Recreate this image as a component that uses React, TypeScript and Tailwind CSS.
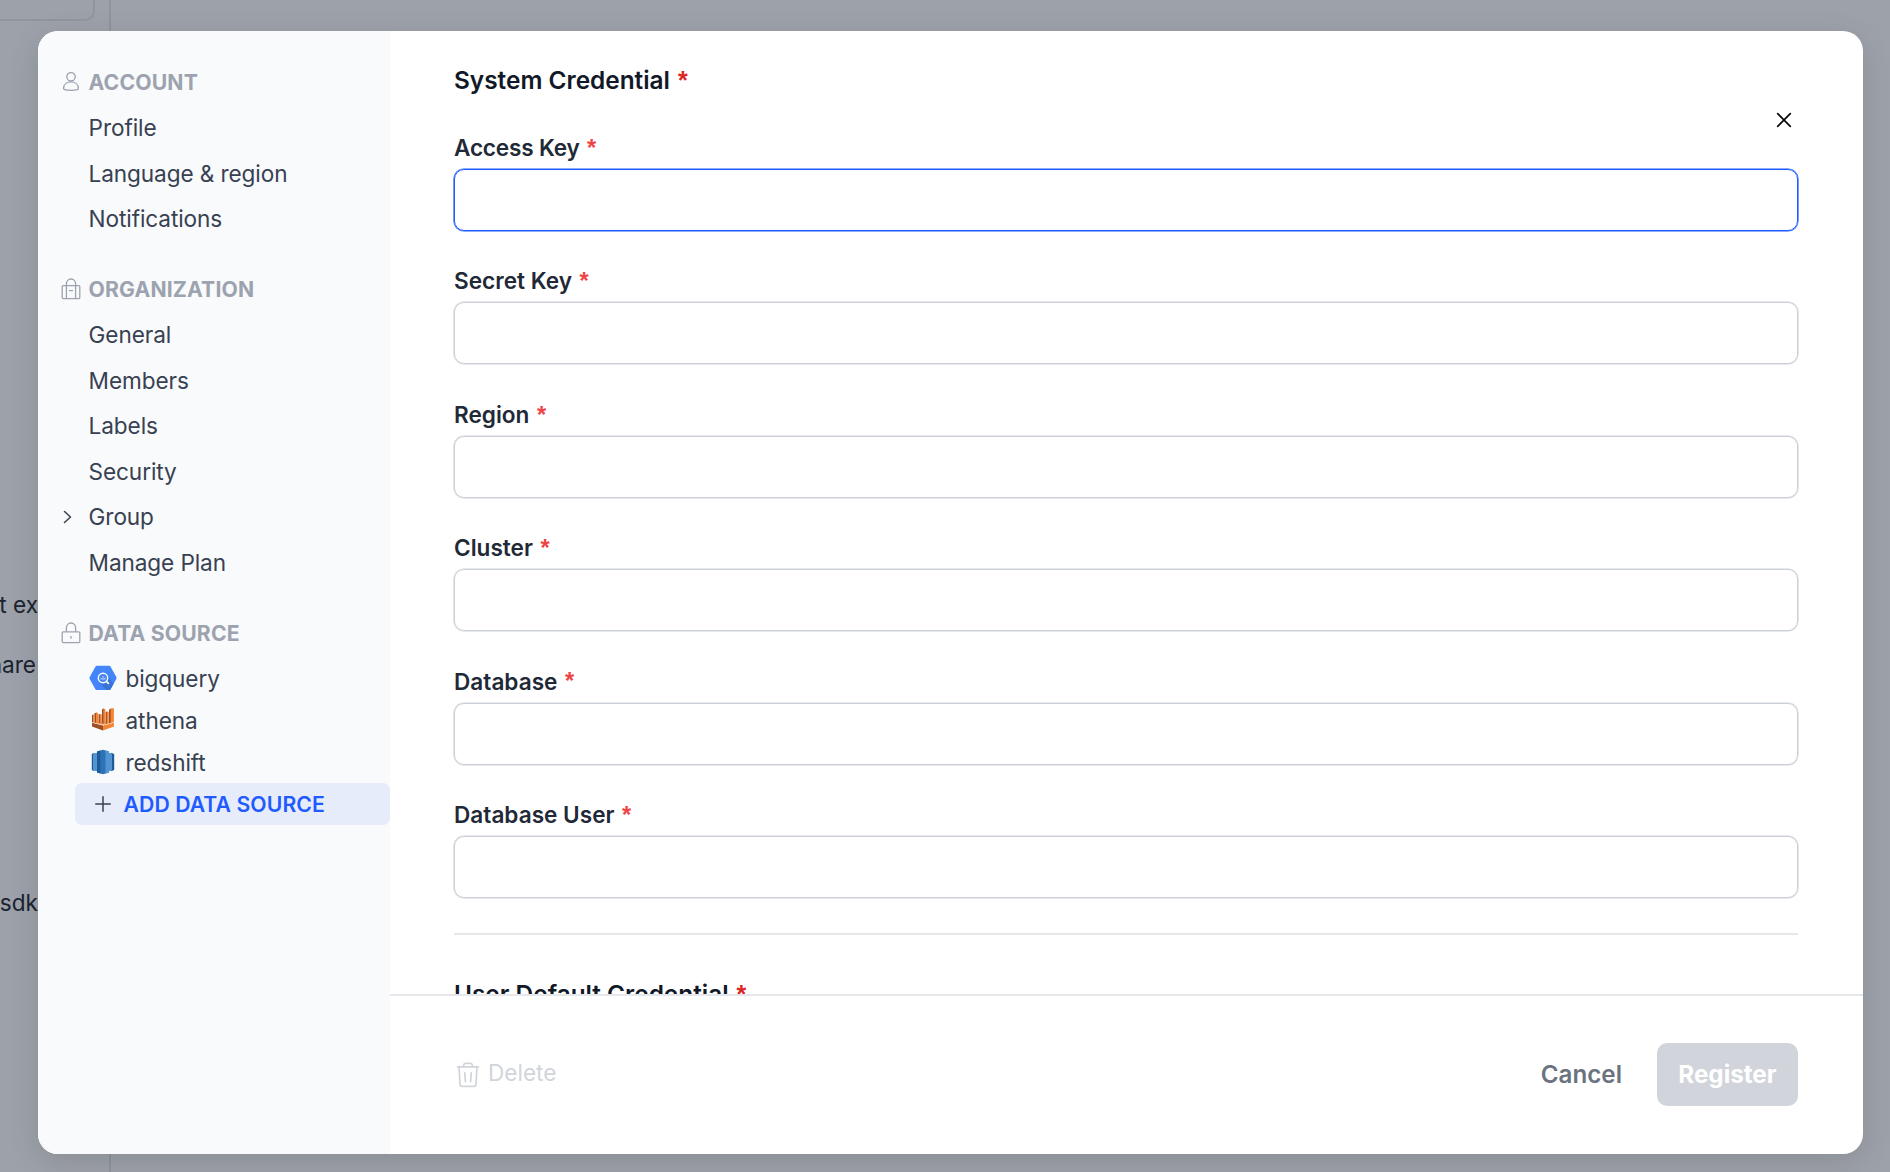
import type { ReactNode } from "react";

function PersonIcon() {
  return (
    <svg width="20" height="22" viewBox="0 0 20 22" fill="none" stroke="#9ca3af" strokeWidth="1.3">
      <circle cx="10" cy="5.8" r="4.2" />
      <path d="M2.6 17.400c0-3.900 3.100-6.500 7.400-6.500s7.400 2.600 7.400 6.500c0 .7-.4 1-1 1.200-1.900.6-4 .8-6.400.8s-4.500-.2-6.400-.8c-.6-.2-1-.5-1-1.200z" />
    </svg>
  );
}

function BagIcon() {
  return (
    <svg width="20" height="22" viewBox="0 0 20 22" fill="none" stroke="#9ca3af" strokeWidth="1.3">
      <rect x="1.2" y="7.6" width="17.6" height="13" rx="1" />
      <path d="M5.400 20.600V6c0-3 2-5 4.600-5s4.600 2 4.600 5v14.600M8 12.600h4" />
    </svg>
  );
}

function LockIcon() {
  return (
    <svg width="20" height="22" viewBox="0 0 20 22" fill="none" stroke="#9ca3af" strokeWidth="1.3">
      <rect x="1.2" y="9.8" width="17.6" height="10.8" rx="1" />
      <path d="M5.400 9.800V6c0-3 2-5 4.600-5s4.600 2 4.600 5v3.800M10 14v2.800" />
    </svg>
  );
}

function BigQueryIcon() {
  return (
    <svg width="28" height="26" viewBox="0 0 28 26">
      <path d="M8 .8h12c.7 0 1.300.3 1.600.9l5.700 10.300c.4.700.4 1.300 0 2l-5.700 10.200c-.3.600-.9.900-1.600.9H8c-.7 0-1.300-.3-1.600-.9L.7 14c-.4-.7-.4-1.300 0-2L6.400 1.700C6.700 1.100 7.300.8 8 .8z" fill="#4386fa" />
      <path d="M17.800 9.500l6.800 9.300-3 5.400c-.3.600-.9.900-1.600.9h-2.500l-7-7z" fill="#3a73d8" />
      <circle cx="14" cy="13" r="4.700" fill="#4386fa" stroke="#fff" strokeWidth="1.4" />
      <path d="M17.400 16.400l2 2" stroke="#fff" strokeWidth="1.6" strokeLinecap="round" />
      <path d="M12.200 13v1.500M14 11.200v4M15.800 12.600v2" stroke="#c5dafd" strokeWidth="1" />
    </svg>
  );
}

function AthenaIcon() {
  return (
    <svg width="28" height="26" viewBox="0 0 28 26">
      <path d="M3 15.800l11 2.600v5.100L3 19.600z" fill="#9d5025" />
      <path d="M25 15.800l-11 2.600v5.100l11-3.900z" fill="#f58536" />
      <path d="M3 15.800l11-1.600 11 1.600-11 2.700z" fill="#fcbf92" />
      <path d="M3 8l1.500-.6v8L3 15zM5.500 6.300L7.700 5.500v10.500l-2.200-.5zM9.500 7.500l2-.6v9.700l-2-.5zM13 2.200l2-.8v15.600l-2-.4zM16.600 5l1.800-.6v12l-1.800.5zM20 2.500l2-.7v14l-2 .5z" fill="#9d5025" />
      <path d="M4.200 7.400l1.400.6v7.800l-1.400-.4zM7 5.500l2.200.8v10L7 15.800zM10.900 6.900l1.900.7v9.200l-1.900-.4zM14.400 1.400l2 .8v14.600l-2 .3zM17.900 4.400l1.900.7v11l-1.900.5zM21.600 1.300h3.300v13.700l-3.300.9z" fill="#f58536" />
    </svg>
  );
}

function RedshiftIcon() {
  return (
    <svg width="28" height="26" viewBox="0 0 28 26">
      <path d="M2.800 5l2.400-1.200v18.400L2.800 21zM22 3.800L25.200 5v16L22 22.200z" fill="#205b99" />
      <path d="M4 4.400l4.500-.6v18.400L4 21.600zM19.500 3.800l3.500.6v17.200l-3.500.6z" fill="#5294cf" />
      <path d="M8 2.600L14 .7l6 1.900v20.800l-6 1.900-6-1.900z" fill="#2e73b8" />
      <path d="M8 2.600L11.400 1.500v23L8 23.400z" fill="#205b99" />
      <path d="M16.500 1.500L20 2.600v20.800l-3.500 1.100z" fill="#5294cf" />
    </svg>
  );
}

function TrashIcon() {
  return (
    <svg width="24" height="28" viewBox="0 0 24 28" fill="none" stroke="#d1d5db" strokeWidth="1.7" strokeLinecap="round" strokeLinejoin="round">
      <path d="M1.500 5.800h21" />
      <path d="M7.500 5.600l.3-1.800c.2-1 .8-1.500 1.800-1.500h4.800c1 0 1.600.5 1.800 1.500l.3 1.800" />
      <path d="M3 6l1 17.200c.1 1.400.9 2.100 2.200 2.100h11.600c1.300 0 2.100-.7 2.200-2.100L21 6" />
      <path d="M8.700 11.800l.7 8.800M15.300 11.800l-.7 8.800" />
    </svg>
  );
}

function Header({ icon, children }: { icon: ReactNode; children: ReactNode }) {
  return (
    <div className="flex h-[45.6px] items-center pl-[23px]">
      {icon}
      <span className="ml-[7.5px] pt-[0.6px] text-[21.2px] font-bold tracking-[0.15px] text-[#9ca3af]">{children}</span>
    </div>
  );
}

function Item({ children, chevron }: { children: ReactNode; chevron?: boolean }) {
  return (
    <div className="flex h-[45.6px] items-center text-[22.6px] tracking-[-0.1px] text-[#374151]">
      <span className="flex w-[50.6px] pl-[24px]">
        {chevron && (
          <svg width="12" height="14" viewBox="0 0 12 14" fill="none" stroke="#374151" strokeWidth="1.5" strokeLinecap="round" strokeLinejoin="round">
            <path d="M2.500 1.500L8.500 7l-6 5.500" />
          </svg>
        )}
      </span>
      <span>{children}</span>
    </div>
  );
}

function Source({ icon, children }: { icon: ReactNode; children: ReactNode }) {
  return (
    <div className="flex h-[42px] items-center pl-[50.5px] text-[22.6px] tracking-[-0.1px] text-[#374151]">
      {icon}
      <span className="ml-[9px] pt-px">{children}</span>
    </div>
  );
}

function Star({ className }: { className: string }) {
  return <span className={`font-['Liberation_Sans',sans-serif] font-bold ${className}`}>*</span>;
}

function Field({ label, focused }: { label: string; focused?: boolean }) {
  return (
    <div className="h-[133.4px]">
      <div className="flex h-[41px] items-center pb-px text-[22.6px] font-semibold text-[#1f2937]">
        <span className={label === "Access Key" ? "tracking-[-0.2px]" : ""}>{label}</span>
        <Star className="ml-[7.5px] pt-px text-[23.5px] text-[#ef4444]" />
      </div>
      <div
        className={
          focused
            ? "h-[62px] rounded-[10px] border border-[#1f5bff] shadow-[0_0_0_0.6px_#1f5bff]"
            : "h-[62px] rounded-[10px] border border-[#cbd0d6] shadow-[0_0_0_0.6px_#d1d5db]"
        }
      />
    </div>
  );
}

function SectionTitle({ children }: { children: ReactNode }) {
  return (
    <h2 className="flex h-[36px] shrink-0 items-center text-[24.4px] font-semibold text-[#111827]">
      <span>{children}</span>
      <Star className="ml-[8px] pt-px text-[25px] text-[#dc2626]" />
    </h2>
  );
}

const fields = ["Access Key", "Secret Key", "Region", "Cluster", "Database", "Database User"];

export default function App() {
  return (
    <div className="relative h-[1172px] w-[1890px] overflow-hidden bg-[#9da1a9] font-[Inter,'Liberation_Sans',sans-serif]">
      <div className="flex h-full w-[111px] flex-col border-r-2 border-[#8f959d] text-[22.6px] text-[#1a2330]">
        <div className="h-[21px] w-[95px] shrink-0 rounded-br-[10px] border-r-2 border-b-2 border-[#90969e]" />
        <div className="mt-[554px] flex h-[60px] w-[38px] shrink-0 items-center justify-end whitespace-nowrap">t ex</div>
        <div className="flex h-[59px] w-[36px] shrink-0 items-center justify-end whitespace-nowrap">hare</div>
        <div className="mt-[179px] flex h-[60px] w-[38px] shrink-0 items-center justify-end whitespace-nowrap">sdk</div>
      </div>

      <div className="absolute left-[38px] top-[31px] flex h-[1122.5px] w-[1825px] overflow-hidden rounded-[20px] bg-white shadow-[0_8px_32px_rgba(0,0,0,0.12)]">
        <aside className="w-[352px] shrink-0 bg-[#f9fafc] pt-[28.5px]">
          <Header icon={<PersonIcon />}>ACCOUNT</Header>
          <Item>Profile</Item>
          <Item>Language &amp; region</Item>
          <Item>Notifications</Item>
          <div className="h-[24.8px]" />
          <Header icon={<BagIcon />}>ORGANIZATION</Header>
          <Item>General</Item>
          <Item>Members</Item>
          <Item>Labels</Item>
          <Item>Security</Item>
          <Item chevron>Group</Item>
          <Item>Manage Plan</Item>
          <div className="h-[24.8px]" />
          <Header icon={<LockIcon />}>DATA SOURCE</Header>
          <div className="pt-[1px]">
            <Source icon={<BigQueryIcon />}>bigquery</Source>
            <Source icon={<AthenaIcon />}>athena</Source>
            <Source icon={<RedshiftIcon />}>redshift</Source>
          </div>
          <div className="ml-[36.5px] flex h-[42px] items-center rounded-[7px] bg-[#e7ecfb] pl-[20px]">
            <svg width="16" height="16" viewBox="0 0 16 16" stroke="#374151" strokeWidth="1.5" strokeLinecap="round">
              <path d="M8 .8v14.400M.8 8h14.400" />
            </svg>
            <span className="ml-[13px] pt-px text-[21.2px] font-semibold tracking-[0.08px] text-[#1f5bff]">ADD DATA SOURCE</span>
          </div>
        </aside>

        <main className="relative flex min-w-0 flex-1 flex-col">
          <div className="flex h-[963px] shrink-0 flex-col overflow-hidden pr-[65.5px] pl-[64px] pt-[31px]">
            <SectionTitle>System Credential</SectionTitle>
            <div className="mt-[30px] h-[796px] shrink-0">
              {fields.map((f, i) => (
                <Field key={f} label={f} focused={i === 0} />
              ))}
            </div>
            <div className="mt-[9px] h-[2px] shrink-0 bg-[#e5e7eb]" />
            <div className="mt-[41.500px] shrink-0">
              <SectionTitle>User Default Credential</SectionTitle>
            </div>
          </div>
          <footer className="flex flex-1 items-center border-t-2 border-[#e5e7eb] pr-[65px] pl-[66px]">
            <div className="flex items-center text-[22.6px] text-[#d1d5db]">
              <TrashIcon />
              <span className="ml-[8px] pb-[4px]">Delete</span>
            </div>
            <span className="ml-auto pt-px text-[24.2px] font-semibold text-[#6b7280]">Cancel</span>
            <div className="ml-[35px] flex h-[63px] w-[141px] items-center justify-center rounded-[10px] bg-[#d1d5db] pt-px text-[24.2px] font-bold text-white">
              Register
            </div>
          </footer>
          <svg className="absolute right-[71px] top-[81px]" width="16" height="16" viewBox="0 0 16 16" stroke="#0a0a0a" strokeWidth="1.7" strokeLinecap="round">
            <path d="M1.700 1.700l12.600 12.600M14.300 1.700L1.700 14.300" />
          </svg>
        </main>
      </div>
    </div>
  );
}
